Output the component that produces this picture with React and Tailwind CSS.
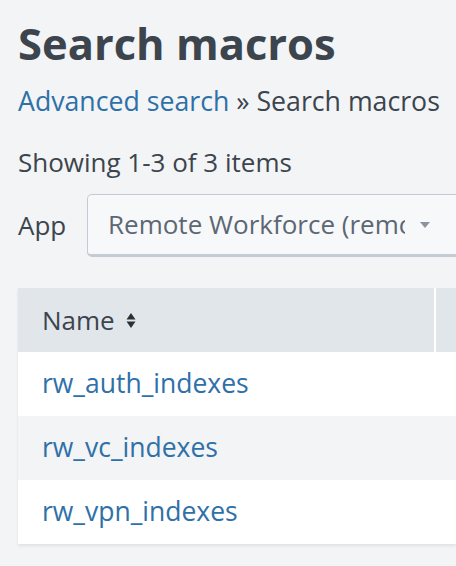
export default function App() {
  const rows = ["rw_auth_indexes", "rw_vc_indexes", "rw_vpn_indexes"];
  return (
    <div className="w-[456px] h-[566px] overflow-hidden bg-[#f2f4f5] pl-[18px] pt-[18px] text-[#3c444d]" style={{ fontFamily: "'Open Sans', 'Noto Sans', sans-serif" }}>
      <h1 className="text-[43.5px] font-bold leading-[52px] text-[#3c444d] whitespace-nowrap">Search macros</h1>
      <div className="mt-[16px] text-[26.7px] leading-[30px] whitespace-nowrap">
        <span className="text-[#2f70a8]">Advanced search</span>
        <span> » Search macros</span>
      </div>
      <div className="mt-[31px] text-[26px] leading-[30px] whitespace-nowrap">Showing 1-3 of 3 items</div>
      <div className="mt-[17px] flex items-center">
        <span className="text-[26px] w-[69px] shrink-0">App</span>
        <div className="relative h-[63px] w-[380px] shrink-0 rounded-[5px] border border-[#c3cbd4] border-b-[3px] bg-[#f7f8fa] flex items-center pl-[20px] overflow-hidden">
          <span className="text-[26px] text-[#5c6773] whitespace-nowrap w-[297px] overflow-hidden">Remote Workforce (remote_workforce)</span>
          <svg className="ml-[14px]" width="12" height="8" viewBox="0 0 12 8"><path d="M1 1 L11 1 L6 7 Z" fill="#8a949e" /></svg>
        </div>
      </div>
      <div className="mt-[31px] shadow-[0_2px_3px_rgba(0,0,0,0.08)]">
        <div className="flex h-[64px] bg-white">
          <div className="w-[416px] shrink-0 bg-[#e1e6eb] flex items-center pl-[24px] text-[26px] text-[#3c444d]">
            Name
            <svg className="ml-[11px] mt-[1px]" width="10" height="17" viewBox="0 0 10 17"><path d="M0.5 7.5 L5 1 L9.5 7.5 Z M0.5 9.5 L9.5 9.5 L5 16 Z" fill="#2b3038" /></svg>
          </div>
          <div className="w-[2px] shrink-0 bg-white"></div>
          <div className="flex-1 bg-[#e1e6eb]"></div>
        </div>
        {rows.map((r, i) => (
          <div key={r} className={`h-[64px] flex items-center pl-[24px] text-[26.5px] text-[#2f70a8] ${i % 2 === 1 ? "bg-[#f2f4f5]" : "bg-white"}`}>{r}</div>
        ))}
      </div>
    </div>
  );
}
